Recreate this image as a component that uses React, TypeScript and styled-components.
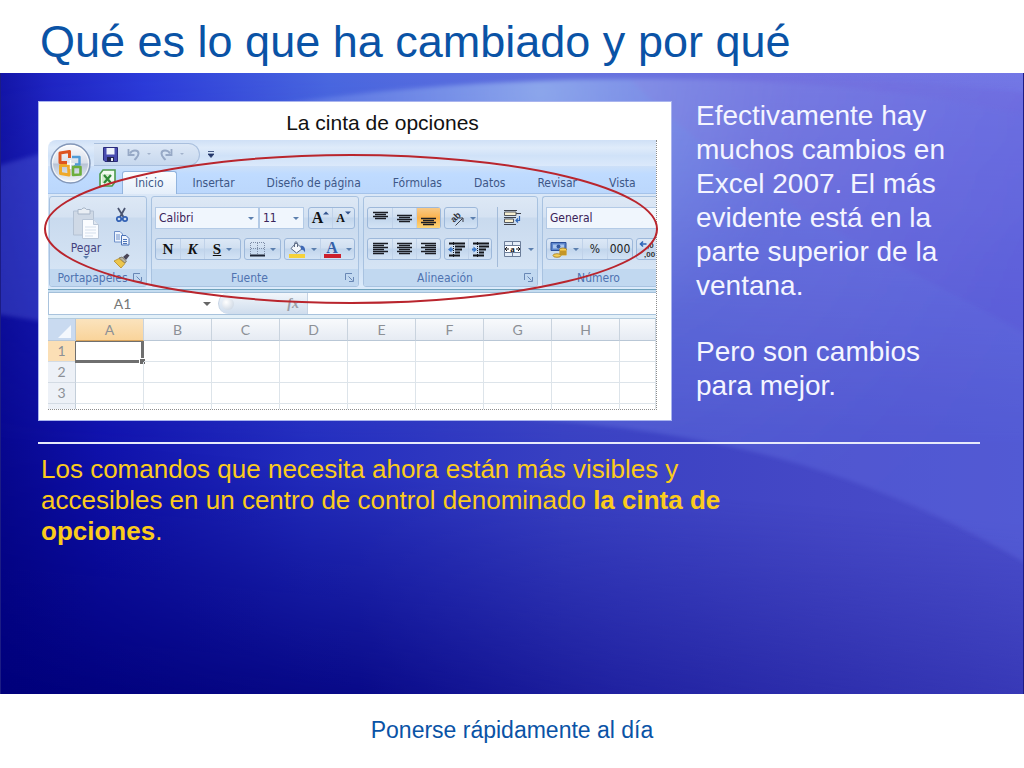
import React from "react";
import styled, { createGlobalStyle, css } from "styled-components";

const uiFont = `"DejaVu Sans Condensed", "DejaVu Sans", Tahoma, sans-serif`;
const sheetFont = `Lato, "Open Sans", sans-serif`;

const GlobalStyle = createGlobalStyle`
  *, *::before, *::after { box-sizing: border-box; }
  body { margin: 0; background: #fff; font-family: "Liberation Sans", Arial, sans-serif; }
  button, select, input { font: inherit; color: inherit; margin: 0; }
`;

/* ---------- slide ---------- */

const Slide = styled.div`
  min-height: 100vh;
  display: flex;
  flex-direction: column;
`;

const Header = styled.header`
  padding: 16px 40px 5px;
`;

const Title = styled.h1`
  margin: 0;
  font-size: 45px;
  line-height: 52px;
  font-weight: 400;
  color: #0a53a6;
`;

const Stage = styled.main`
  position: relative;
  isolation: isolate;
  flex: 1;
  padding: 28px 43px 40px 37px;
  border: 1px solid #1c1c84;
  border-width: 0 1px;
`;

const Backdrop = styled.svg`
  position: absolute;
  inset: 0;
  width: 100%;
  height: 100%;
  z-index: -1;
`;

const Columns = styled.div`
  display: grid;
  grid-template-columns: minmax(0, 634px) minmax(240px, 1fr);
  gap: 24px;
  padding-bottom: 21px;
  border-bottom: 2px solid #e6e9fb;
`;

const Aside = styled.div`
  font-size: 28px;
  line-height: 34px;
  color: #f4f5ff;
  p { margin: 0 0 32px; }
  p:first-child { margin-top: -2px; }
  p:last-child { margin-bottom: 0; }
`;

const Note = styled.p`
  max-width: 700px;
  margin: 10px 0 0 3px;
  font-size: 26px;
  line-height: 31px;
  color: #fbcb1c;
`;

const Footer = styled.footer`
  padding: 22px 38px 24px;
  text-align: center;
  font-size: 23px;
  line-height: 28px;
  color: #0a53a6;
`;

/* ---------- figure ---------- */

const Figure = styled.figure`
  margin: 0;
  padding: 0 14px 10px 9px;
  background: #fff;
  border: 1px solid #a9b4ee;
`;

const Caption = styled.figcaption`
  padding: 9px 0 5px 60px;
  text-align: center;
  font-size: 21px;
  line-height: 24px;
  color: #111;
`;

const Mock = styled.div`
  position: relative;
  font-family: ${uiFont};
`;

const Window = styled.div`
  overflow: hidden;
  border-right: 1px dotted #8b8b8b;
  border-bottom: 1px dotted #8b8b8b;
  border-top-left-radius: 8px;
`;

const Highlight = styled.svg`
  position: absolute;
  left: -5px;
  top: 12px;
  width: calc(100% + 7px);
  height: 154px;
  overflow: visible;
  pointer-events: none;
`;

const TitleBar = styled.div`
  height: 26px;
  padding: 2px 0 0 46px;
  display: flex;
  gap: 8px;
  align-items: center;
  background: linear-gradient(#cfe0f6, #dfebfa 30%, #d0e2f8 60%, #dbe9fb);
`;

const QuickAccess = styled.div`
  height: 23px;
  width: 106px;
  display: flex;
  align-items: center;
  gap: 9px;
  padding-left: 9px;
  border: 1px solid #a9bfdd;
  border-left: 0;
  border-radius: 0 12px 12px 0;
  background: linear-gradient(#dde8f6, #c7d8ee);
`;

const bare = css`
  appearance: none;
  padding: 0;
  border: 0;
  background: none;
`;

const IconButton = styled.button`
  ${bare}
  display: flex;
  align-items: center;
  gap: 7px;
`;

const OfficeButton = styled.button`
  ${bare}
  position: absolute;
  left: 2px;
  top: 3px;
  width: 41px;
  height: 41px;
`;

const TabRow = styled.div`
  height: 28px;
  padding-left: 51px;
  display: flex;
  align-items: flex-end;
  border-bottom: 1px solid #a5c3ea;
  background: linear-gradient(#cde0f8, #bfdbff 30%, #bbd7fc);
`;

const TabIcon = styled.span`
  width: 23px;
  height: 24px;
`;

const Tab = styled.button<{ $active?: boolean }>`
  ${bare}
  height: 23px;
  margin-bottom: -1px;
  padding: 0 ${(p) => (p.$active ? 12 : 15)}px;
  border: 1px solid ${(p) => (p.$active ? "#92b4de" : "transparent")};
  border-bottom: 0;
  border-radius: 3px 3px 0 0;
  background: ${(p) => (p.$active ? "linear-gradient(#fbfdff, #e4eefa)" : "none")};
  font-size: 12px;
  line-height: 22px;
  white-space: nowrap;
  color: #3d5787;
`;

const Ribbon = styled.div`
  display: flex;
  gap: 4px;
  height: 95px;
  padding: 2px 0 2px 1px;
  background: linear-gradient(#dbe8f7, #cddff3 20%, #c8dbf1 60%, #dcebfb);
`;

const RibbonEdge = styled.div`
  height: 4px;
  border-top: 1px solid #6fa3bd;
  border-bottom: 1px solid #a3bfd9;
  background: #c4dcf0;
`;

const GroupBox = styled.section<{ $width?: number }>`
  flex: ${(p) => (p.$width ? `0 0 ${p.$width}px` : "1 0 0")};
  min-width: 0;
  overflow: hidden;
  display: flex;
  flex-direction: column;
  border: 1px solid #a8c2e0;
  border-right-width: ${(p) => (p.$width ? 1 : 0)}px;
  border-radius: ${(p) => (p.$width ? "3px" : "3px 0 0 3px")};
  background: linear-gradient(#dde8f5, #d5e2f2 22%, #c9daee 24%, #d9e7f6);
`;

const GroupBody = styled.div`
  flex: 1;
  display: flex;
  padding: 10px 3px 0;
`;

const GroupLabel = styled.div`
  display: flex;
  align-items: center;
  height: 17px;
  padding: 0 4px 0 2px;
  background: #c1d8f0;
  color: #4f73b0;
  h2 {
    flex: 1;
    margin: 0;
    font-size: 12px;
    line-height: 16px;
    font-weight: 400;
    text-align: center;
    white-space: nowrap;
  }
`;

const Rows = styled.div`
  display: flex;
  flex-direction: column;
  gap: 9px;
`;

const Row = styled.div<{ $gap?: number }>`
  display: flex;
  gap: ${(p) => p.$gap ?? 3}px;
  height: 22px;
`;

const ButtonSet = styled.div`
  display: flex;
  border: 1px solid #9db8da;
  border-radius: 3px;
  background: linear-gradient(#dce8f6, #d0dff1 45%, #c1d5ec 50%, #d3e3f5);
`;

const FontSizeSet = styled(ButtonSet)`
  margin-left: 4px;
`;

const Tool = styled.button<{ $width: number; $on?: boolean; $flat?: boolean }>`
  ${bare}
  flex: 0 0 ${(p) => p.$width}px;
  width: ${(p) => p.$width}px;
  display: flex;
  align-items: center;
  justify-content: center;
  gap: 5px;
  font-size: 12px;
  color: #222;
  background: ${(p) => (p.$on ? "linear-gradient(#f7c987, #fbb24c 50%, #fdd679)" : "none")};
  & + & { border-left: ${(p) => (p.$flat ? 0 : 1)}px solid #c0d2e9; }
`;

const Letter = styled.span<{ $italic?: boolean; $underline?: boolean; $size?: number }>`
  font-family: "Liberation Serif", "Times New Roman", serif;
  font-weight: 700;
  font-size: ${(p) => p.$size ?? 15}px;
  line-height: 18px;
  font-style: ${(p) => (p.$italic ? "italic" : "normal")};
  text-decoration: ${(p) => (p.$underline ? "underline" : "none")};
  color: #111;
`;

const SizeLabel = styled.span`
  display: flex;
  align-items: center;
`;

const Combo = styled.label<{ $width?: number }>`
  flex: ${(p) => (p.$width ? `0 0 ${p.$width}px` : "1 0 120px")};
  display: grid;
  align-items: center;
  border: 1px solid #b3cae6;
  background: #f0f6fd;
  select, svg { grid-area: 1 / 1; }
  svg { justify-self: end; margin-right: 4px; pointer-events: none; }
  select {
    ${bare}
    width: 100%;
    height: 20px;
    padding-left: 3px;
    font-size: 12px;
    color: #3a2358;
  }
`;

const PasteButton = styled.button`
  ${bare}
  width: 66px;
  height: 62px;
  display: flex;
  flex-direction: column;
  align-items: center;
  font-size: 12px;
  line-height: 16px;
  color: #44437f;
`;

const SmallColumn = styled.div`
  display: flex;
  flex-direction: column;
  align-items: center;
  margin-left: -6px;
  gap: 7px;
`;

const Divider = styled.div`
  width: 1px;
  height: 60px;
  margin: 0 6px 0 5px;
  background: #a3bbd9;
`;

/* ---------- worksheet ---------- */

const FormulaBar = styled.div`
  display: flex;
  height: 22px;
  border-left: 1px solid #a9c3dd;
  border-bottom: 1px solid #a9c3dd;
  background: #fff;
`;

const NameBox = styled.label`
  width: 169px;
  display: grid;
  align-items: center;
  input, svg { grid-area: 1 / 1; }
  svg { justify-self: end; margin-right: 7px; }
  input {
    ${bare}
    width: 147px;
    text-align: center;
    font-family: ${sheetFont};
    font-size: 14px;
    color: #777;
  }
`;

const FxButton = styled.button`
  ${bare}
  width: 90px;
  display: flex;
  align-items: center;
  justify-content: space-between;
  padding: 0 8px 0 3px;
  border: 1px solid #c5d3e4;
  border-width: 0 1px;
  border-radius: 11px 0 0 11px;
  background: linear-gradient(#f2f6fb, #cfdded);
  font-family: "Liberation Serif", serif;
  font-size: 14px;
  font-style: italic;
  font-weight: 700;
  color: #9a9da6;
`;

const Orb = styled.span`
  width: 12px;
  height: 12px;
  border-radius: 50%;
  background: radial-gradient(circle at 35% 35%, #fff, #d2dbe6 75%);
`;

const FormulaInput = styled.input`
  ${bare}
  flex: 1;
  min-width: 0;
`;

const Band = styled.div`
  height: 4px;
  background: #e3f0f8;
  border-bottom: 1px solid #b3cbdd;
`;

const Sheet = styled.table`
  width: 100%;
  table-layout: fixed;
  border-collapse: separate;
  border-spacing: 0;
  font-family: ${sheetFont};
  font-size: 14px;
  line-height: 20px;
  color: #8c9096;
  th, td { padding: 0; font-weight: 400; }
`;

const ColHead = styled.th<{ $on?: boolean }>`
  height: 22px;
  border-right: 1px solid #c9d3de;
  border-bottom: 1px solid ${(p) => (p.$on ? "#d9a45c" : "#b9c7d6")};
  background: ${(p) => (p.$on ? "linear-gradient(#fbe3bd, #f9d49b)" : "linear-gradient(#f8fafc, #e6ebf3)")};
`;

const RowHead = styled.th<{ $on?: boolean }>`
  height: 21px;
  border-right: 1px solid #c3ced9;
  border-bottom: 1px solid #d3dbe4;
  background: ${(p) => (p.$on ? "#fbdfb5" : "#edf1f7")};
`;

const Corner = styled.th`
  border-right: 1px solid #b9c7d6;
  border-bottom: 1px solid #b9c7d6;
  background: #c9daf0;
  svg { display: block; margin: 4px 0 0 10px; }
`;

const Cell = styled.td`
  position: relative;
  border-right: 1px solid #dde4ea;
  border-bottom: 1px solid #dde4ea;
`;

const CutOffRow = styled.tr`
  height: 5px;
  td {
    border-right: 1px solid #dde4ea;
  }
  td:first-child {
    border-right-color: #c3ced9;
    background: #edf1f7;
  }
`;

const Selection = styled.span`
  position: absolute;
  inset: 0 -1px -2px -1px;
  border: 1px solid #6f6f6f;
  border-right-width: 3px;
  border-bottom-width: 3px;
  &::after {
    content: "";
    position: absolute;
    right: -4px;
    bottom: -4px;
    width: 6px;
    height: 6px;
    background: #6a6a6a;
    border: 1px solid #fff;
    border-width: 1px 0 0 1px;
  }
`;

/* ---------- drawings ---------- */

const Arrow = ({ color = "#5b7fae", size = 6 }: { color?: string; size?: number }) => (
  <svg width={size} height={size / 2} viewBox="0 0 6 3" aria-hidden="true">
    <path d="M0 0h6L3 3z" fill={color} />
  </svg>
);

const Launcher = () => (
  <IconButton aria-label="Más opciones">
    <svg width="9" height="9" viewBox="0 0 9 9" fill="none" stroke="#6887b5">
      <path d="M.5 7V.5H7M3.500 3.500l4 4M8.500 4v4.500H4" />
    </svg>
  </IconButton>
);

const OfficeLogo = () => (
  <svg width="41" height="41" viewBox="0 0 41 41" aria-hidden="true">
    <defs>
      <linearGradient id="orb" x2="0" y2="1">
        <stop offset="0" stopColor="#fbfcfe" />
        <stop offset=".48" stopColor="#d9dfea" />
        <stop offset=".52" stopColor="#b9c4d6" />
        <stop offset="1" stopColor="#f4f8fd" />
      </linearGradient>
    </defs>
    <circle cx="20.500" cy="20.500" r="19.500" fill="url(#orb)" stroke="#8397b8" strokeWidth="1.400" />
    <circle cx="20.500" cy="20.500" r="18" fill="none" stroke="#fff" strokeOpacity=".8" />
    <g fill="none" strokeWidth="3" strokeLinejoin="round">
      <path d="M17 19.500H10V10l9.500-1.500V15" stroke="#dd5320" />
      <path d="M22 14h7.500v7.500H24" stroke="#4f9bd6" strokeWidth="2.400" />
      <path d="M18.500 22.500H10.500v8l8.500 1.500z" stroke="#efa92a" />
      <path d="M23 24h7.500v7.500l-7.500 .5z" stroke="#6cae3c" strokeWidth="2.600" />
    </g>
    <path d="M20.500 17v9M17 21h8" stroke="#fff" strokeWidth="1.400" />
  </svg>
);

const SaveIcon = () => (
  <svg width="15" height="15" viewBox="0 0 15 15">
    <path d="M.5.5h14v14H2L.5 13z" fill="#4a4db0" stroke="#2b2c7c" />
    <path d="M3.500 1h8v6.500h-8z" fill="#eef2fb" />
    <path d="M4 10h7v4.500H4z" fill="#23244f" />
    <path d="M8 11h2v3H8z" fill="#e8ebf6" />
  </svg>
);

const UndoIcon = ({ redo }: { redo?: boolean }) => (
  <svg width="13" height="13" viewBox="0 0 13 13" fill="none">
    <g transform={redo ? "translate(13 0) scale(-1 1)" : undefined}>
      <path d="M3 5.500C5 1.500 11.500 1.500 11.500 5.500c0 3-2 4-4 6.500" stroke="#97a9c6" strokeWidth="2" />
      <path d="M1.500 1v6h6" stroke="#97a9c6" strokeWidth="1.800" />
    </g>
  </svg>
);

const ExcelIcon = () => (
  <svg width="18" height="18" viewBox="0 0 18 18">
    <path d="M4 1h12v12l-3 4H1V5z" fill="#f3faf1" stroke="#4c9a4a" strokeWidth="1.600" />
    <path d="M3 5h8v9H3z" fill="#d3ebcd" />
    <path d="M5 6l7 8M12 6l-7 8" stroke="#2f8a35" strokeWidth="2.200" />
  </svg>
);

const PasteIcon = () => (
  <svg width="28" height="33" viewBox="0 0 28 33">
    <path d="M1.500 4h20v24h-20z" fill="#cfd9e6" stroke="#b4c2d4" />
    <path d="M6 2.500h3.500L11 1h2l1.500 1.500H18V7H6z" fill="#e9eef4" stroke="#a8b6c8" />
    <path d="M10.500 12.500h11l5 5v14h-16z" fill="#fafcff" stroke="#bac7d8" />
    <path d="M21.500 12.500v5h5" fill="#dfe7f1" stroke="#bac7d8" />
    <path d="M13 20h11M13 23h11M13 26h11M13 29h8" stroke="#d5dfec" />
  </svg>
);

const CutIcon = () => (
  <svg width="14" height="16" viewBox="0 0 14 16" fill="none">
    <path d="M3 1l5.500 9M10 1L5 10" stroke="#4a5470" strokeWidth="1.800" />
    <circle cx="4" cy="12" r="2.200" stroke="#3160b4" strokeWidth="1.700" />
    <circle cx="10" cy="12" r="2.200" stroke="#3160b4" strokeWidth="1.700" />
  </svg>
);

const CopyIcon = () => (
  <svg width="16" height="16" viewBox="0 0 16 16" stroke="#6d8fc9">
    <path d="M.5 1.500H6L8.500 4v8h-8z" fill="#eef4fd" />
    <path d="M2 5h4M2 7h4M2 9h4" />
    <path d="M7.500 5.500H12l3 3v6.500H7.500z" fill="#eef4fd" stroke="#4b73b8" />
    <path d="M9 9.500h4M9 11.500h4M9 13.500h4" stroke="#4b73b8" />
  </svg>
);

const BrushIcon = () => (
  <svg width="17" height="16" viewBox="0 0 17 16">
    <path d="M10 4l4-3.500 2.500 2L13 7z" fill="#4a4658" />
    <path d="M6 5l3-1 4.500 4L12 10z" fill="#b9b3a0" stroke="#77705c" strokeWidth=".8" />
    <path d="M1 8l5-2.500 6 5L8 15z" fill="#ecc64c" stroke="#b48a28" strokeWidth=".8" />
  </svg>
);

const BordersIcon = () => (
  <svg width="15" height="15" viewBox="0 0 15 15" fill="none">
    <path d="M.5 12V.5h14V12M7.500 1v11M1 6.500h13" stroke="#7d8ca6" strokeDasharray="1 1" />
    <path d="M0 13.500h15" stroke="#1c2434" strokeWidth="2" />
  </svg>
);

const FillIcon = () => (
  <svg width="18" height="17" viewBox="0 0 18 17">
    <path d="M8 2l6.500 5.500-6 4.500L3 7.500z" fill="#f4f7fb" stroke="#5c6a84" />
    <path d="M6.500 6V2.500c0-2 3-2 3 0V6" fill="none" stroke="#5c6a84" />
    <path d="M12.500 4.500c4 0 5 3 4.500 7-1-2-2-3-4-3z" fill="#3e68b5" />
    <path d="M1 13h16v4H1z" fill="#f6d23a" />
  </svg>
);

const FontColor = styled.span`
  width: 17px;
  border-bottom: 4px solid #cc1f2c;
  font-family: "Liberation Serif", serif;
  font-weight: 700;
  font-size: 16px;
  line-height: 13px;
  text-align: center;
  color: #355fa8;
`;

type LineSpec = [number, number];
const Lines = ({ rows, y = 1 }: { rows: LineSpec[]; y?: number }) => (
  <svg width="15" height="15" viewBox="0 0 15 15" stroke="#1b1d24">
    {rows.map(([from, to], i) => (
      <path key={i} d={`M${from} ${y + i * 2 + 0.5}H${to}`} strokeWidth="1.400" />
    ))}
  </svg>
);
const short: LineSpec[] = [[0, 15], [2, 13], [0, 15], [2, 13]];
const alignRows = (kind: "l" | "c" | "r"): LineSpec[] =>
  Array.from({ length: 6 }, (_, i): LineSpec =>
    i % 2 === 0 ? [0, 15] : kind === "l" ? [0, 11] : kind === "c" ? [2, 13] : [4, 15]
  );

const IndentIcon = ({ more }: { more?: boolean }) => (
  <svg width="17" height="15" viewBox="0 0 17 15">
    <path d="M1 1.500h16M7 4.500h10M7 7.500h7M7 10.500h5M1 13.500h11" stroke="#15171c" strokeWidth="1.800" />
    <path d="M5.500 0v15" stroke="#15171c" strokeDasharray="1 1" />
    <path d={more ? "M5 7.500L1.500 4.500V6.500H0v2h1.500v2z" : "M0 7.500l3.500-3v2H5v2H3.500v2z"} fill="#3c78c8" />
  </svg>
);

const OrientationIcon = () => (
  <svg width="18" height="17" viewBox="0 0 18 17">
    <text transform="translate(7 13) rotate(-45)" fontFamily="Liberation Sans" fontWeight="700" fontSize="9" fill="#2c2f38">ab</text>
    <path d="M8.500 15.500l7-7M12 8H16V12" stroke="#3a3d46" fill="none" />
  </svg>
);

const WrapIcon = () => (
  <svg width="17" height="17" viewBox="0 0 17 17" fill="none">
    <path d="M.5 2h11.500v3.500H.5zM.5 9h9v3.500h-9z" fill="#f7efd0" stroke="#55585f" />
    <path d="M0 .5h13M12 3.500h5M0 7.500h12M0 14.500h12" stroke="#3e424c" />
    <path d="M15.500 6v4.500H12M14 8.500l-2 2 2 2" stroke="#2f66b8" strokeWidth="1.200" />
  </svg>
);

const MergeIcon = () => (
  <svg width="17" height="16" viewBox="0 0 17 16" fill="none">
    <path d="M.5.5h16v15H.5z" fill="#e4edf8" stroke="#6b7d99" />
    <path d="M1 4.500h15M1 11.500h15M8.500 1v3M8.500 12v3" stroke="#6b7d99" />
    <path d="M1 5h15v6H1z" fill="#fff" />
    <path d="M1 8h4M12 8h4M3 6L1 8l2 2M14 6l2 2-2 2" stroke="#16181e" />
    <text x="8.500" y="10.500" textAnchor="middle" fontFamily="Liberation Serif" fontWeight="700" fontSize="9" fill="#111">a</text>
  </svg>
);

const CurrencyIcon = () => (
  <svg width="18" height="17" viewBox="0 0 18 17">
    <path d="M1 1.500h15v8H1z" fill="#5c86cc" stroke="#2b4f98" />
    <path d="M3 3.500h11v4H3z" fill="#a9c6ee" />
    <circle cx="8.500" cy="5.500" r="2" fill="#34589e" />
    <ellipse cx="13" cy="8.500" rx="3.500" ry="1.500" fill="#f3cf58" stroke="#a67a17" strokeWidth=".8" />
    <path d="M9.500 9v5.500h7V9z" fill="#e3b238" />
    <path d="M9.500 11h7M9.500 13h7" stroke="#a67a17" />
    <ellipse cx="7" cy="14.500" rx="4" ry="1.800" fill="#f3cf58" stroke="#a67a17" strokeWidth=".8" />
  </svg>
);

const DecimalIcon = () => (
  <svg width="22" height="20" viewBox="0 0 22 20">
    <path d="M7.500 5H1.500M4 2.500L1.500 5l2.500 2.500" stroke="#2f66b8" strokeWidth="1.600" fill="none" />
    <text x="8" y="9" fontFamily="Liberation Sans" fontWeight="700" fontSize="8" fill="#333">,0</text>
    <text x="5" y="18" fontFamily="Liberation Sans" fontWeight="700" fontSize="8" fill="#333">,00</text>
  </svg>
);

const GrowShrink = ({ up }: { up?: boolean }) => (
  <svg width="6" height="14" viewBox="0 0 6 14">
    <path d={up ? "M0 3.500L3 .5l3 3z" : "M0 .5h6l-3 3z"} fill="#33558f" />
  </svg>
);

const Waves = () => (
  <Backdrop viewBox="0 0 1024 621" preserveAspectRatio="none" aria-hidden="true">
    <defs>
      <linearGradient id="sky">
        <stop offset="0" stopColor="#1416a8" />
        <stop offset=".05" stopColor="#2026c4" />
        <stop offset=".14" stopColor="#2c3cda" />
        <stop offset=".32" stopColor="#4a68e0" />
        <stop offset=".55" stopColor="#6472de" />
        <stop offset=".75" stopColor="#7272e0" />
        <stop offset="1" stopColor="#7478e6" />
      </linearGradient>
      <linearGradient id="mid">
        <stop offset="0" stopColor="#080890" />
        <stop offset=".1" stopColor="#1012ac" />
        <stop offset=".3" stopColor="#232dbe" />
        <stop offset=".55" stopColor="#3840c2" />
        <stop offset=".8" stopColor="#4548c6" />
        <stop offset="1" stopColor="#4a4ecb" />
      </linearGradient>
      <linearGradient id="deep">
        <stop offset="0" stopColor="#00007a" />
        <stop offset=".35" stopColor="#04047f" />
        <stop offset=".6" stopColor="#181896" />
        <stop offset="1" stopColor="#2e2eac" />
      </linearGradient>
      <linearGradient id="fadeMid" x2="0" y2="1">
        <stop offset="0" stopColor="#000" />
        <stop offset=".6" stopColor="#fff" />
      </linearGradient>
      <linearGradient id="fadeDeep" x2="0" y2="1" gradientTransform="rotate(8)">
        <stop offset=".58" stopColor="#000" />
        <stop offset="1" stopColor="#fff" />
      </linearGradient>
      <mask id="maskMid"><rect width="1024" height="621" fill="url(#fadeMid)" /></mask>
      <mask id="maskDeep"><rect width="1024" height="621" fill="url(#fadeDeep)" /></mask>
      <radialGradient id="glow" gradientUnits="userSpaceOnUse" cx="540" cy="20" r="520">
        <stop offset="0" stopColor="#a4c4f4" stopOpacity=".65" />
        <stop offset=".5" stopColor="#7c94ec" stopOpacity=".3" />
        <stop offset="1" stopColor="#6674e8" stopOpacity=".3" />
      </radialGradient>
      <linearGradient id="veil" x2="1" y2=".6">
        <stop offset="0" stopColor="#8a84e0" stopOpacity=".3" />
        <stop offset="1" stopColor="#5a52d4" stopOpacity=".3" />
      </linearGradient>
      <filter id="soft"><feGaussianBlur stdDeviation="2" /></filter>
    </defs>
    <rect width="1024" height="621" fill="url(#sky)" />
    <rect width="1024" height="621" fill="url(#mid)" mask="url(#maskMid)" />
    <rect width="1024" height="621" fill="url(#deep)" mask="url(#maskDeep)" />
    <g filter="url(#soft)">
      <path
        d="M-10 95C180 36 400 6 640 6c160 0 290 12 400 40V498C880 402 730 360 530 346L300 290-10 240z"
        fill="url(#glow)"
      />
      <path d="M630 6C740 120 900 190 1034 265V20C930 8 800 4 630 6z" fill="url(#veil)" />
    </g>
  </Backdrop>
);

/* ---------- page ---------- */

const tabs = ["Inicio", "Insertar", "Diseño de página", "Fórmulas", "Datos", "Revisar", "Vista"];
const columns = ["A", "B", "C", "D", "E", "F", "G", "H"];

const Group = ({
  label, width, launcher = true, children,
}: {
  label: string; width?: number; launcher?: boolean; children: React.ReactNode;
}) => (
  <GroupBox $width={width}>
    <GroupBody>{children}</GroupBody>
    <GroupLabel>
      <h2>{label}</h2>
      {launcher && <Launcher />}
    </GroupLabel>
  </GroupBox>
);

const RibbonGroups = () => (
  <Ribbon>
    <Group label="Portapapeles" width={98}>
      <PasteButton>
        <PasteIcon />
        Pegar
        <Arrow />
      </PasteButton>
      <SmallColumn>
        <IconButton aria-label="Cortar"><CutIcon /></IconButton>
        <IconButton aria-label="Copiar"><CopyIcon /></IconButton>
        <IconButton aria-label="Copiar formato"><BrushIcon /></IconButton>
      </SmallColumn>
    </Group>

    <Group label="Fuente" width={208}>
      <Rows>
        <Row $gap={0}>
          <Combo $width={104}>
            <select aria-label="Fuente"><option>Calibri</option></select>
            <Arrow />
          </Combo>
          <Combo $width={45}>
            <select aria-label="Tamaño de fuente"><option>11</option></select>
            <Arrow />
          </Combo>
          <FontSizeSet>
            <Tool $width={23} $flat aria-label="Aumentar tamaño"><SizeLabel><Letter $size={16}>A</Letter><GrowShrink up /></SizeLabel></Tool>
            <Tool $width={22} $flat aria-label="Disminuir tamaño"><SizeLabel><Letter $size={12}>A</Letter><GrowShrink /></SizeLabel></Tool>
          </FontSizeSet>
        </Row>
        <Row>
          <ButtonSet>
            <Tool $width={24}><Letter>N</Letter></Tool>
            <Tool $width={24}><Letter $italic>K</Letter></Tool>
            <Tool $width={36}><Letter $underline>S</Letter><Arrow /></Tool>
          </ButtonSet>
          <ButtonSet>
            <Tool $width={35} aria-label="Bordes"><BordersIcon /><Arrow /></Tool>
          </ButtonSet>
          <ButtonSet>
            <Tool $width={35} $flat aria-label="Color de relleno"><FillIcon /><Arrow /></Tool>
            <Tool $width={34} $flat><FontColor>A</FontColor><Arrow /></Tool>
          </ButtonSet>
        </Row>
      </Rows>
    </Group>

    <Group label="Alineación" width={175}>
      <Rows>
        <Row>
          <ButtonSet>
            <Tool $width={24} aria-label="Alinear arriba"><Lines rows={short} y={1} /></Tool>
            <Tool $width={24} aria-label="Alinear en el medio"><Lines rows={short} y={4} /></Tool>
            <Tool $width={24} $on aria-label="Alinear abajo"><Lines rows={short} y={7} /></Tool>
          </ButtonSet>
          <ButtonSet>
            <Tool $width={32} aria-label="Orientación"><OrientationIcon /><Arrow /></Tool>
          </ButtonSet>
        </Row>
        <Row>
          <ButtonSet>
            <Tool $width={24} aria-label="Izquierda"><Lines rows={alignRows("l")} /></Tool>
            <Tool $width={24} aria-label="Centrar"><Lines rows={alignRows("c")} /></Tool>
            <Tool $width={24} aria-label="Derecha"><Lines rows={alignRows("r")} /></Tool>
          </ButtonSet>
          <ButtonSet>
            <Tool $width={23} $flat aria-label="Disminuir sangría"><IndentIcon /></Tool>
            <Tool $width={23} $flat aria-label="Aumentar sangría"><IndentIcon more /></Tool>
          </ButtonSet>
        </Row>
      </Rows>
      <Divider />
      <Rows>
        <Row><IconButton aria-label="Ajustar texto"><WrapIcon /></IconButton></Row>
        <Row><IconButton aria-label="Combinar y centrar"><MergeIcon /><Arrow /></IconButton></Row>
      </Rows>
    </Group>

    <Group label="Número" launcher={false}>
      <Rows>
        <Row>
          <Combo>
            <select aria-label="Formato de número"><option>General</option></select>
          </Combo>
        </Row>
        <Row>
          <ButtonSet>
            <Tool $width={35} aria-label="Formato de moneda"><CurrencyIcon /><Arrow /></Tool>
            <Tool $width={25}>%</Tool>
            <Tool $width={25}>000</Tool>
          </ButtonSet>
          <ButtonSet>
            <Tool $width={26} aria-label="Aumentar decimales"><DecimalIcon /></Tool>
          </ButtonSet>
        </Row>
      </Rows>
    </Group>
  </Ribbon>
);

const Worksheet = () => (
  <Sheet>
    <colgroup>
      <col width={28} />
      {columns.map((c) => <col key={c} width={68} />)}
      <col />
    </colgroup>
    <thead>
      <tr>
        <Corner aria-label="Seleccionar todo">
          <svg width="13" height="13" viewBox="0 0 13 13"><path d="M13 0v13H0z" fill="#f4f8fd" /></svg>
        </Corner>
        {columns.map((c) => <ColHead key={c} $on={c === "A"} scope="col">{c}</ColHead>)}
        <ColHead />
      </tr>
    </thead>
    <tbody>
      {[1, 2, 3].map((n) => (
        <tr key={n}>
          <RowHead $on={n === 1} scope="row">{n}</RowHead>
          {columns.map((c) => <Cell key={c}>{n === 1 && c === "A" && <Selection />}</Cell>)}
          <Cell />
        </tr>
      ))}
      <CutOffRow>
        <td />
        {columns.map((c) => <td key={c} />)}
        <td />
      </CutOffRow>
    </tbody>
  </Sheet>
);

export default function App() {
  return (
    <Slide>
      <GlobalStyle />
      <Header>
        <Title>Qué es lo que ha cambiado y por qué</Title>
      </Header>
      <Stage>
        <Waves />
        <Columns>
          <Figure>
            <Caption>La cinta de opciones</Caption>
            <Mock>
              <Window>
                <TitleBar>
                  <QuickAccess>
                    <IconButton aria-label="Guardar"><SaveIcon /></IconButton>
                    <IconButton aria-label="Deshacer"><UndoIcon /><Arrow color="#a3b3cc" size={4} /></IconButton>
                    <IconButton aria-label="Rehacer"><UndoIcon redo /><Arrow color="#a3b3cc" size={4} /></IconButton>
                  </QuickAccess>
                  <IconButton aria-label="Personalizar">
                    <svg width="6" height="7" viewBox="0 0 6 7"><path d="M0 .5h6M0 3h6L3 6.500z" fill="#23386b" stroke="#23386b" strokeWidth=".8" /></svg>
                  </IconButton>
                </TitleBar>
                <TabRow>
                  <TabIcon><ExcelIcon /></TabIcon>
                  {tabs.map((t) => <Tab key={t} $active={t === "Inicio"}>{t}</Tab>)}
                </TabRow>
                <RibbonGroups />
                <RibbonEdge />
                <FormulaBar>
                  <NameBox>
                    <input aria-label="Cuadro de nombres" defaultValue="A1" />
                    <Arrow color="#666" size={8} />
                  </NameBox>
                  <FxButton><Orb />fx</FxButton>
                  <FormulaInput aria-label="Barra de fórmulas" />
                </FormulaBar>
                <Band />
                <Worksheet />
              </Window>
              <OfficeButton aria-label="Botón de Office"><OfficeLogo /></OfficeButton>
              <Highlight viewBox="0 0 616 154" preserveAspectRatio="none" aria-hidden="true">
                <ellipse cx="308" cy="77" rx="306" ry="74" fill="none" stroke="#b9252d" strokeWidth="2" />
              </Highlight>
            </Mock>
          </Figure>
          <Aside>
            <p>Efectivamente hay muchos cambios en Excel 2007. El más evidente está en la parte superior de la ventana.</p>
            <p>Pero son cambios para mejor.</p>
          </Aside>
        </Columns>
        <Note>
          Los comandos que necesita ahora están más visibles y accesibles en un centro de control
          denominado <strong>la cinta de opciones</strong>.
        </Note>
      </Stage>
      <Footer>Ponerse rápidamente al día</Footer>
    </Slide>
  );
}
